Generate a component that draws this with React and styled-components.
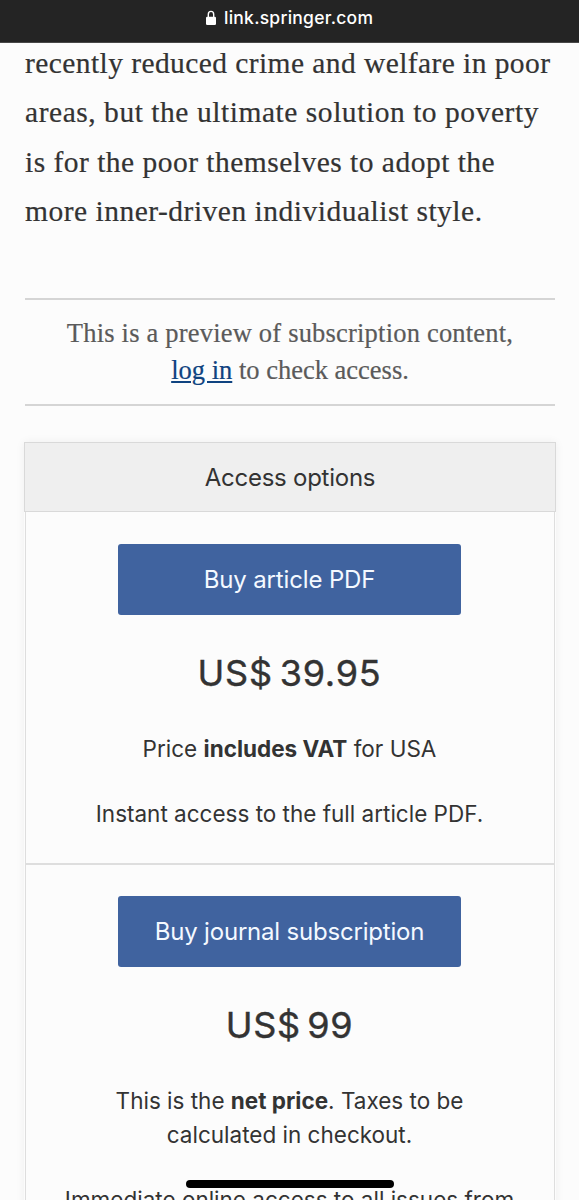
import React from "react";
import styled, { createGlobalStyle } from "styled-components";

const GlobalStyle = createGlobalStyle`
  *, *::before, *::after { box-sizing: border-box; }
  html, body { margin: 0; background: #fcfcfc; }
  body { overflow: hidden; }
`;

const Screen = styled.div`
  position: relative;
  width: 579px;
  height: 1200px;
  overflow: hidden;
  background: #fcfcfc;
  color: #333;
  font-family: Inter, "Liberation Sans", sans-serif;
`;

const AddressBar = styled.header`
  display: flex;
  align-items: center;
  height: 43px;
  padding: 0 0 6px 205px;
  gap: 7px;
  background: #242424;
  border-bottom: 1px solid #484848;
  color: #fff;
`;

const Line = styled.span`
  display: block;
  white-space: nowrap;
  letter-spacing: ${(p) => p.$track || 0}px;
`;

const Domain = styled(Line)`
  font-size: 17.5px;
  line-height: 22px;
  font-weight: 500;
`;

const Content = styled.main`
  padding: 0 23px 0 24px;
`;

const Abstract = styled.p`
  margin: -4.5px 0 0;
  padding: 0 1px;
  height: 259.5px;
  font-family: "Liberation Serif", serif;
  font-size: 29.5px;
  line-height: 49.5px;
  -webkit-text-stroke: 0.2px currentColor;
`;

const PreviewNotice = styled.p`
  margin: 0 1px;
  height: 108px;
  padding-top: 15px;
  border-top: 2px solid #d5d5d5;
  border-bottom: 2px solid #d5d5d5;
  text-align: center;
  font-family: "Liberation Serif", serif;
  font-size: 26.5px;
  line-height: 37px;
  color: #5a5a5a;
  -webkit-text-stroke: 0.2px currentColor;
`;

const LogIn = styled.a`
  color: #0f4380;
  text-decoration: underline;
  text-decoration-thickness: 1.5px;
  text-underline-offset: 2px;
`;

const Options = styled.section`
  margin-top: 36px;
  box-shadow: 0 0 9px rgba(0, 0, 0, 0.06);
`;

const OptionsTitle = styled.h2`
  margin: 0;
  height: 70px;
  border: 1.5px solid #d9d9d9;
  background: #efefef;
  text-align: center;
  font-size: 24px;
  font-weight: 400;
  line-height: 70px;
`;

const Option = styled.article`
  display: flex;
  flex-direction: column;
  align-items: center;
  height: ${(p) => p.$height}px;
  margin: 0 1px;
  padding: ${(p) => p.$height - 321}px 1px 0 0;
  border: solid #dedede;
  border-width: 0 1px 2px;
  text-align: center;
`;

const BuyButton = styled.button`
  flex: none;
  width: 343px;
  height: 71px;
  padding: 0;
  border: 0;
  border-radius: 3px;
  background: #40639f;
  color: #f4f9ff;
  font: 400 24px/71px Inter, sans-serif;
`;

const Price = styled.strong`
  margin-top: 34px;
  font-size: 36px;
  font-weight: 400;
  line-height: 48px;
  word-spacing: -4px;
  -webkit-text-stroke: 0.4px currentColor;
`;

const Detail = styled.p`
  margin: ${(p) => p.$gap}px 0 0;
  font-size: 22.5px;
  line-height: 34px;
`;

const HomeIndicator = styled.div`
  position: absolute;
  left: 186px;
  bottom: 12px;
  width: 208px;
  height: 8px;
  border-radius: 4px;
  background: #000;
`;

const LockIcon = () => (
  <svg width="12" height="16" viewBox="0 0 12 16" aria-hidden="true">
    <path d="M3.3 7V4.4a2.7 3 0 0 1 5.4 0V7" fill="none" stroke="#fff" strokeWidth="1.4" />
    <rect x="1" y="6.8" width="10" height="8.2" rx="1.3" fill="#fff" />
  </svg>
);

export default function App() {
  return (
    <>
      <GlobalStyle />
      <Screen>
        <AddressBar>
          <LockIcon />
          <Domain $track={0.25}>link.springer.com</Domain>
        </AddressBar>
        <Content>
          <Abstract>
            <Line $track={0.42}>recently reduced crime and welfare in poor</Line>
            <Line $track={0.54}>areas, but the ultimate solution to poverty</Line>
            <Line $track={0.48}>is for the poor themselves to adopt the</Line>
            <Line $track={0.5}>more inner-driven individualist style.</Line>
          </Abstract>
          <PreviewNotice>
            <Line $track={0.2}>This is a preview of subscription content,</Line>
            <Line><LogIn>log in</LogIn> to check access.</Line>
          </PreviewNotice>
          <Options>
            <OptionsTitle><Line $track={-0.25}>Access options</Line></OptionsTitle>
            <Option $height={353}>
              <BuyButton><Line $track={-0.15}>Buy article PDF</Line></BuyButton>
              <Price><Line $track={0.75}>US$ 39.95</Line></Price>
              <Detail $gap={35}><Line>Price <b>includes VAT</b> for USA</Line></Detail>
              <Detail $gap={31}><Line>Instant access to the full article PDF.</Line></Detail>
            </Option>
            <Option $height={352}>
              <BuyButton><Line $track={-0.2}>Buy journal subscription</Line></BuyButton>
              <Price><Line $track={0.6}>US$ 99</Line></Price>
              <Detail $gap={35}>
                <Line>This is the <b>net price</b>. Taxes to be</Line>
                <Line>calculated in checkout.</Line>
              </Detail>
              <Detail $gap={31}><Line>Immediate online access to all issues from</Line></Detail>
            </Option>
          </Options>
        </Content>
        <HomeIndicator />
      </Screen>
    </>
  );
}
